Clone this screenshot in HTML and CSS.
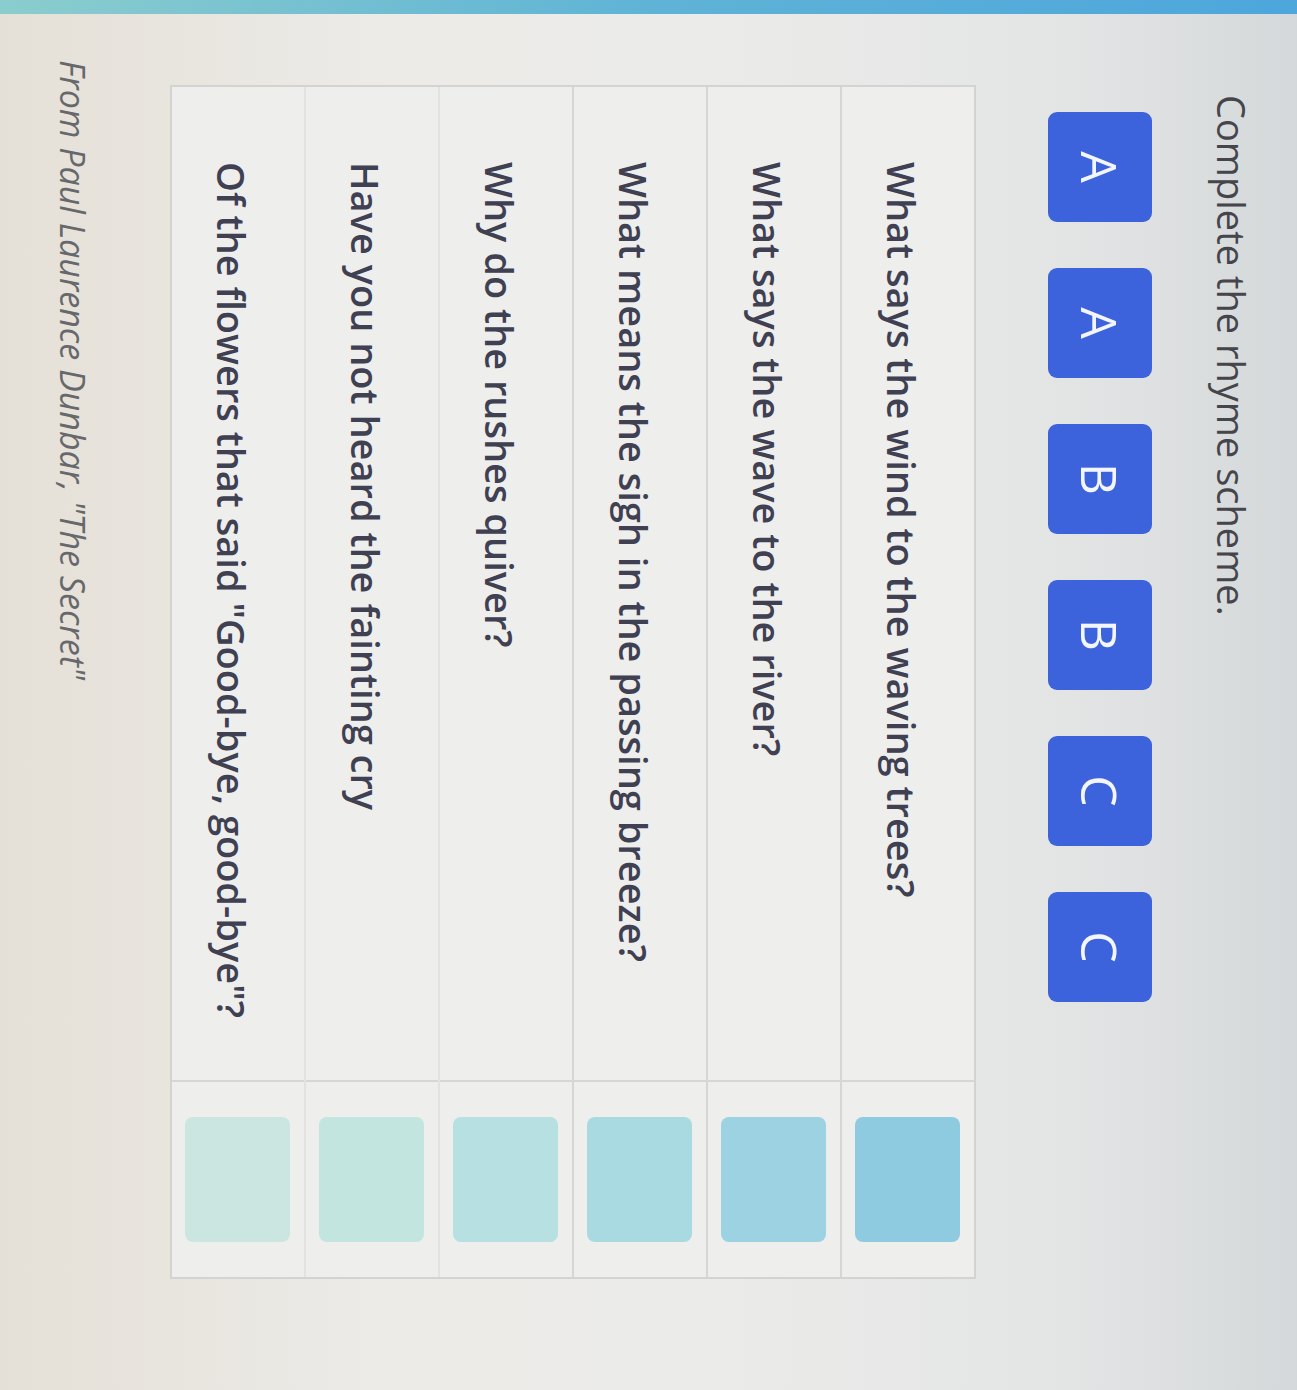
FILE: index.html
```html
<!DOCTYPE html>
<html lang="en">
<head>
<meta charset="utf-8">
<title>Complete the rhyme scheme</title>
<link rel="stylesheet" href="styles.css">
</head>
<body>
<div class="page">
  <div class="edge"></div>
  <main class="content">
    <h1 class="title">Complete the rhyme scheme.</h1>
    <div class="choices">
      <div class="chip">A</div>
      <div class="chip">A</div>
      <div class="chip">B</div>
      <div class="chip">B</div>
      <div class="chip">C</div>
      <div class="chip">C</div>
    </div>
    <div class="table">
      <div class="row r1"><div class="line">What says the wind to the waving trees?</div><div class="slot"><div class="drop"></div></div></div>
      <div class="row r2"><div class="line">What says the wave to the river?</div><div class="slot"><div class="drop"></div></div></div>
      <div class="row r3"><div class="line">What means the sigh in the passing breeze?</div><div class="slot"><div class="drop"></div></div></div>
      <div class="row r4"><div class="line">Why do the rushes quiver?</div><div class="slot"><div class="drop"></div></div></div>
      <div class="row r5"><div class="line">Have you not heard the fainting cry</div><div class="slot"><div class="drop"></div></div></div>
      <div class="row r6"><div class="line">Of the flowers that said "Good-bye, good-bye"?</div><div class="slot"><div class="drop"></div></div></div>
    </div>
    <p class="source">From Paul Laurence Dunbar, "The Secret"</p>
  </main>
</div>
</body>
</html>
```

FILE: styles.css
```css
html, body {
  margin: 0;
  padding: 0;
  width: 1297px;
  height: 1390px;
  overflow: hidden;
  background: #e6e6e3;
}

.page {
  width: 1390px;
  height: 1297px;
  transform-origin: 0 0;
  transform: translate(1297px, 0) rotate(90deg);
  display: flex;
  font-family: "Open Sans", "Noto Sans", sans-serif;
  background: linear-gradient(to bottom, #d5d8da 0%, #e3e5e5 18%, #ebebe9 45%, #ecebe8 70%, #e5e0d7 100%);
}

.edge {
  width: 14px;
  flex: none;
  background: linear-gradient(to bottom, #4da6dc 0%, #5fb3d6 50%, #8acdcd 100%);
}

.content {
  flex: 1;
  display: flex;
  flex-direction: column;
  align-items: flex-start;
  padding: 43px 0 0 46px;
}

.title {
  margin: 0 0 0 35px;
  font-size: 38px;
  line-height: 44px;
  font-weight: 500;
  color: #45464c;
}

.choices {
  display: flex;
  gap: 46px;
  margin: 58px 0 0 52px;
}

.chip {
  width: 110px;
  height: 104px;
  border-radius: 9px;
  background: #3d63dc;
  color: #f4f6ff;
  font-size: 50px;
  line-height: 104px;
  text-align: center;
}

.table {
  margin: 72px 0 0 25px;
  width: 1190px;
  border: 2px solid #d3d4d2;
  display: flex;
  flex-direction: column;
  background: #eeeeec;
}

.row {
  display: flex;
  height: 132px;
  border-top: 2px solid #d6d7d5;
}

.row.r1 {
  border-top: none;
}

.row.r5, .row.r6 {
  border-top-color: #e2e2de;
}

.line {
  width: 995px;
  box-sizing: border-box;
  padding: 12px 0 0 75px;
  display: flex;
  align-items: center;
  font-size: 38px;
  font-weight: 600;
  color: #3f4052;
  border-right: 2px solid #d6d7d5;
}

.slot {
  flex: 1;
  display: flex;
  align-items: center;
  justify-content: center;
}

.drop {
  width: 125px;
  height: 105px;
  border-radius: 8px;
  background: #8fcbe0;
}

.r2 .drop { background: #9dd2e2; }
.r3 .drop { background: #a9dae2; }
.r4 .drop { background: #b6e0e1; }
.r5 .drop { background: #c2e5df; }
.r6 .drop { background: #cbe6e0; }

.source {
  margin: 77px 0 0 0;
  font-size: 34px;
  line-height: 40px;
  font-style: italic;
  color: #67686c;
}
```
